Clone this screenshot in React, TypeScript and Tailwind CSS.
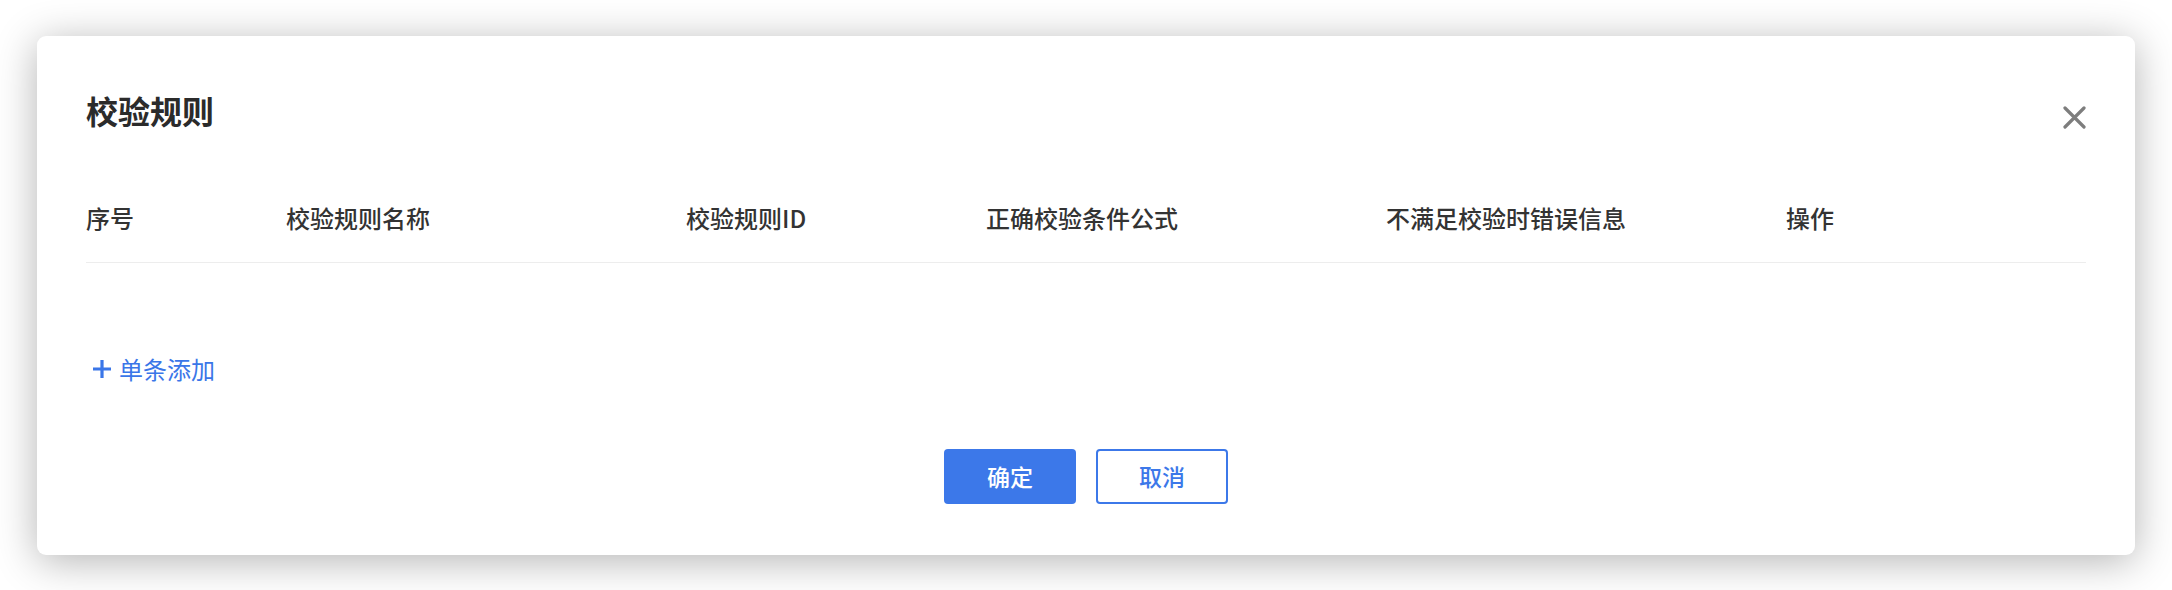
import { useState } from "react";

// table columns, widths taken from the header layout
const columns = [
  { key: "index", label: "序号", width: "w-[200px]" },
  { key: "name", label: "校验规则名称", width: "w-[400px]" },
  { key: "id", label: "校验规则ID", width: "w-[300px]" },
  { key: "formula", label: "正确校验条件公式", width: "w-[400px]" },
  { key: "message", label: "不满足校验时错误信息", width: "w-[400px]" },
  { key: "action", label: "操作", width: "w-[300px]" },
];

const App = () => {
  const [rules, setRules] = useState<number[]>([]);

  return (
    <div className="min-h-[590px] bg-white pt-[36px] pl-[37px] font-['Noto_Sans_CJK_SC',sans-serif]">
      {/* DIALOG */}
      <div className="relative w-[2098px] rounded-[9px] bg-white px-[49px] pt-[58px] pb-[51px] shadow-[0_6px_42px_rgba(0,0,0,0.3)]">
        {/* CLOSE */}
        <button className="absolute top-[70px] right-[49px] h-[23px] w-[23px] text-[#7d7d7d]">
          <svg viewBox="0 0 23 23" className="h-[23px] w-[23px]">
            <path
              d="M2 2 L21 21 M21 2 L2 21"
              stroke="currentColor"
              strokeWidth="3.2"
              strokeLinecap="round"
            />
          </svg>
        </button>

        {/* TITLE */}
        <h1 className="text-[32px] leading-[32px] font-semibold text-[#2b2b2b]">
          校验规则
        </h1>

        {/* TABLE HEADER */}
        <div className="mt-[80px] flex border-b border-[#ededed] pb-[32px]">
          {columns.map((col) => (
            <div
              key={col.key}
              className={`${col.width} text-[24px] leading-6 font-medium text-[#333]`}
            >
              {col.label}
            </div>
          ))}
        </div>

        {/* ROWS (empty) */}
        {rules.map((r) => (
          <div key={r} className="h-[60px] border-b border-[#ededed]" />
        ))}

        {/* ADD */}
        <button
          onClick={() => setRules((prev) => [...prev, prev.length])}
          className="mt-[94px] ml-[6px] flex items-center gap-[7px] text-[24px] leading-6 text-[#3a76e8]"
        >
          <svg viewBox="0 0 20 20" className="h-[20px] w-[20px]">
            <path d="M10 1 V19 M1 10 H19" stroke="currentColor" strokeWidth="3.2" />
          </svg>
          单条添加
        </button>

        {/* FOOTER */}
        <div className="mt-[68px] flex justify-center gap-[20px]">
          <button className="h-[55px] w-[132px] rounded-[4px] bg-[#3c78e9] text-[23px] font-medium text-white">
            确定
          </button>
          <button className="h-[55px] w-[132px] rounded-[4px] border-2 border-[#3c78e9] bg-white text-[23px] font-medium text-[#3c78e9]">
            取消
          </button>
        </div>
      </div>
    </div>
  );
};

export default App;
